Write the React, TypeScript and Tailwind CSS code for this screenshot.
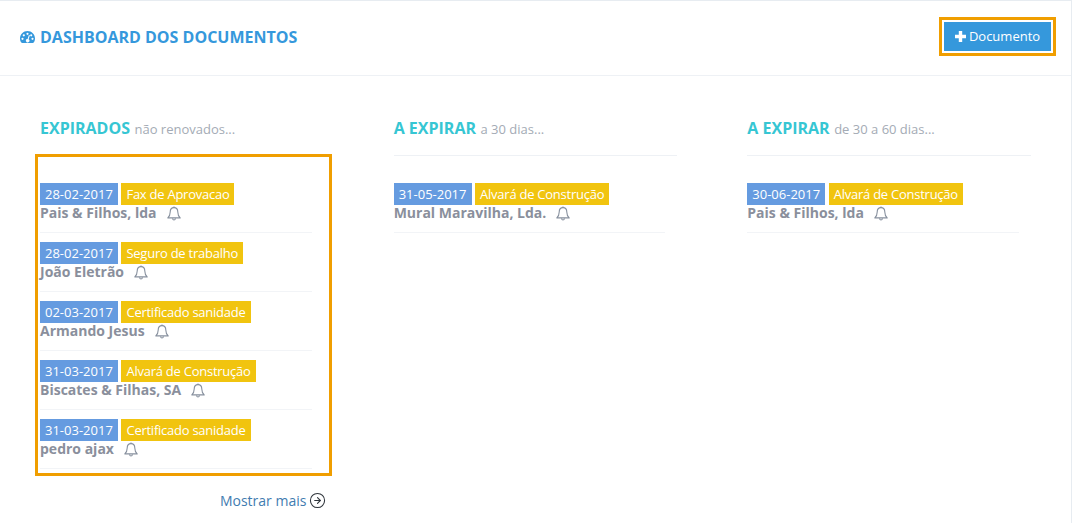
import { FiArrowRightCircle } from 'react-icons/fi'

const EXPIRED = [
  { date: '28-02-2017', type: 'Fax de Aprovacao', name: 'Pais & Filhos, lda' },
  { date: '28-02-2017', type: 'Seguro de trabalho', name: 'João Eletrão' },
  { date: '02-03-2017', type: 'Certificado sanidade', name: 'Armando Jesus' },
  { date: '31-03-2017', type: 'Alvará de Construção', name: 'Biscates & Filhas, SA' },
  { date: '31-03-2017', type: 'Certificado sanidade', name: 'pedro ajax' },
]

type Doc = (typeof EXPIRED)[number]

function DashboardIcon() {
  return (
    <svg width="15" height="12" viewBox="0 0 15 12" className="shrink-0">
      <path d="M7.5 0C3.4 0 0 3.3 0 7.5 0 9 .5 10.5 1.3 11.6c.2.3.5.4.8.4h10.8c.3 0 .6-.1.8-.4C14.5 10.5 15 9 15 7.5 15 3.3 11.6 0 7.5 0z" fill="#3598dc" />
      <g fill="#fff">
        <circle cx="2.5" cy="7.8" r="1.1" />
        <circle cx="3.8" cy="4.3" r="1.1" />
        <circle cx="7.5" cy="2.8" r="1.1" />
        <circle cx="12.5" cy="7.8" r="1.1" />
        <circle cx="11.2" cy="4.3" r="1.1" />
        <path d="M8.9 4 9.9 4.3 8.6 8.3a1.7 1.7 0 1 1-1-.3z" />
      </g>
    </svg>
  )
}

function BellIcon() {
  return (
    <svg width="14" height="15" viewBox="0 0 14 15" fill="none" stroke="#87909e" strokeWidth="1.1" className="ml-[10px] shrink-0">
      <path d="M7 1.6C4.5 1.6 3.2 3.500 3.200 6c0 3-.9 4.500-2.400 5.900h12.400C11.700 10.500 10.800 9 10.800 6c0-2.500-1.300-4.400-3.800-4.400z" strokeLinejoin="round" />
      <path d="M7 .5v1.100M5.500 12.300c.2 1.100.8 1.700 1.500 1.700s1.300-.6 1.500-1.700" />
    </svg>
  )
}

function DocRow({ doc }: { doc: Doc }) {
  return (
    <div className="mb-[9px] h-[50px] border-b border-[#f2f4f7]">
      <div className="flex h-[22px] gap-[3.6px] text-[13px] leading-[22px] text-white">
        <span className="bg-[#659be0] px-[5px]">{doc.date}</span>
        <span className="bg-[#f1c40f] px-[5px] tracking-[-0.25px]">{doc.type}</span>
      </div>
      <div className="-mt-px flex h-[18px] items-center text-[14px] leading-[18px] font-bold text-[#8a8f9c]">
        <span>{doc.name}</span>
        <BellIcon />
      </div>
    </div>
  )
}

function ColumnHead({ title, note }: { title: string; note: string }) {
  return (
    <div className="flex h-[26px] items-baseline gap-[4.5px]">
      <span className="text-[16px] font-bold text-[#36c6d3]">{title}</span>
      <span className="text-[13px] text-[#a4abb5]">{note}</span>
    </div>
  )
}

export default function App() {
  return (
    <div className="h-[523px] w-[1072px] overflow-hidden border-t border-r border-[#e7ecf1] bg-white font-['Open_Sans',sans-serif]">
      <header className="flex h-[75px] items-center justify-between border-b border-[#eef1f5] pr-[15px] pb-[3px] pl-[20px]">
        <h1 className="flex items-center gap-[5px] text-[16px] font-bold text-[#3598dc]">
          <DashboardIcon />
          DASHBOARD DOS DOCUMENTOS
        </h1>
        <div className="border-[3px] border-[#f09e00] p-[2px]">
          <button className="flex h-[29px] w-[107px] items-center justify-center gap-[3px] bg-[#3598dc] text-[13px] text-white">
            <svg width="11" height="11" viewBox="0 0 11 11">
              <path d="M3.8 0h3.4v3.8H11v3.4H7.2V11H3.800V7.2H0V3.8h3.8z" fill="#fff" />
            </svg>
            Documento
          </button>
        </div>
      </header>

      <main className="grid grid-cols-[353.67px_353.67px_284px] pt-[40px] pl-[40px]">
        <section>
          <ColumnHead title="EXPIRADOS" note="não renovados..." />
          <div className="mt-[12px] -ml-[5px] h-[322px] w-[297px] border-[3px] border-[#f09e00] pt-[26px] pl-[2px]">
            <div className="w-[272px]">
              {EXPIRED.map((doc, i) => (
                <DocRow key={i} doc={doc} />
              ))}
            </div>
          </div>
          <a className="mt-[14px] flex w-[286px] items-center justify-end gap-[2.6px] text-[14px] text-[#3f7cb0]">
            Mostrar mais
            <FiArrowRightCircle size={17} strokeWidth={1.5} className="text-[#2f353b]" />
          </a>
        </section>

        <section>
          <ColumnHead title="A EXPIRAR" note="a 30 dias..." />
          <div className="mt-[13px] w-[283px] border-t border-[#eef1f5] pt-[27px]">
            <div className="w-[271px]">
              <DocRow doc={{ date: '31-05-2017', type: 'Alvará de Construção', name: 'Mural Maravilha, Lda.' }} />
            </div>
          </div>
        </section>

        <section>
          <ColumnHead title="A EXPIRAR" note="de 30 a 60 dias..." />
          <div className="mt-[13px] w-[284px] border-t border-[#eef1f5] pt-[27px]">
            <div className="w-[272px]">
              <DocRow doc={{ date: '30-06-2017', type: 'Alvará de Construção', name: 'Pais & Filhos, lda' }} />
            </div>
          </div>
        </section>
      </main>
    </div>
  )
}
